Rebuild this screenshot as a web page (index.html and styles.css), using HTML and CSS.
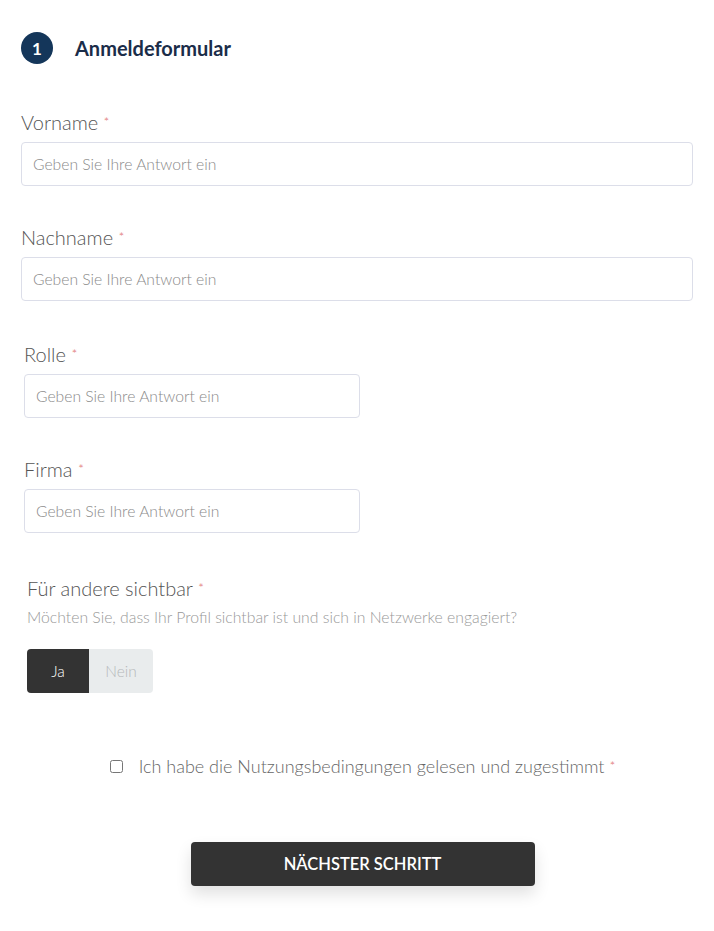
FILE: index.html
```html
<!DOCTYPE html>
<html lang="de">
<head>
    <meta charset="UTF-8">
    <meta name="viewport" content="width=device-width, initial-scale=1.0">
    <title>Anmeldeformular</title>
    <link rel="stylesheet" href="styles.css">
</head>
<body>
    <div class="form-page">
        <!-- Step header -->
        <div class="step-header">
            <span class="step-number">1</span>
            <h1 class="step-title">Anmeldeformular</h1>
        </div>

        <div class="field">
            <label class="field-label" for="vorname">Vorname <span class="req">*</span></label>
            <input type="text" id="vorname" class="text-input" placeholder="Geben Sie Ihre Antwort ein">
        </div>

        <div class="field">
            <label class="field-label" for="nachname">Nachname <span class="req">*</span></label>
            <input type="text" id="nachname" class="text-input" placeholder="Geben Sie Ihre Antwort ein">
        </div>

        <div class="field field-half">
            <label class="field-label" for="rolle">Rolle <span class="req">*</span></label>
            <input type="text" id="rolle" class="text-input" placeholder="Geben Sie Ihre Antwort ein">
        </div>

        <div class="field field-half">
            <label class="field-label" for="firma">Firma <span class="req">*</span></label>
            <input type="text" id="firma" class="text-input" placeholder="Geben Sie Ihre Antwort ein">
        </div>

        <!-- Visibility toggle -->
        <div class="field field-toggle">
            <div class="field-label">Für andere sichtbar <span class="req">*</span></div>
            <p class="field-help">Möchten Sie, dass Ihr Profil sichtbar ist und sich in Netzwerke engagiert?</p>
            <div class="toggle">
                <button type="button" class="toggle-btn active">Ja</button>
                <button type="button" class="toggle-btn">Nein</button>
            </div>
        </div>

        <label class="terms">
            <input type="checkbox" class="terms-box">
            <span>Ich habe die Nutzungsbedingungen gelesen und zugestimmt <span class="req">*</span></span>
        </label>

        <div class="actions">
            <button type="button" class="next-btn">NÄCHSTER SCHRITT</button>
        </div>
    </div>
</body>
</html>
```

FILE: styles.css
```css
body {
    margin: 0;
    background-color: #fff;
    font-family: Lato, "Open Sans", sans-serif;
    color: #555;
}
.form-page {
    padding: 32px 21px 40px 21px;
}
.step-header {
    display: flex;
    align-items: center;
    gap: 22px;
    margin-bottom: 46px;
}
.step-number {
    width: 32px;
    height: 32px;
    border-radius: 50%;
    background-color: #14365a;
    color: #fff;
    font-weight: 700;
    font-size: 17px;
    display: flex;
    align-items: center;
    justify-content: center;
}
.step-title {
    margin: 0;
    font-size: 20px;
    font-weight: 700;
    color: #1b2d49;
}
.field {
    display: flex;
    flex-direction: column;
    margin-bottom: 39px;
}
.field-half {
    margin-left: 3px;
    margin-bottom: 37px;
    padding-top: 2px;
    width: 336px;
}
.field-label {
    font-size: 20px;
    font-weight: 300;
    line-height: 24px;
    color: #555;
    margin-bottom: 8px;
}
.req {
    color: #e07070;
    font-size: 14px;
    vertical-align: top;
}
.text-input {
    box-sizing: border-box;
    height: 44px;
    width: 100%;
    padding: 0 11px;
    border: 1px solid #dcdee9;
    border-radius: 4px;
    font-family: Lato, "Open Sans", sans-serif;
    font-size: 15.7px;
    font-weight: 300;
    color: #444;
}
.text-input::placeholder {
    color: #8a8a8a;
}
.field-toggle {
    margin-left: 6px;
    padding-top: 6px;
}
.field-toggle .field-label {
    margin-bottom: 7px;
}
.field-help {
    margin: 0 0 22px 0;
    font-size: 15.75px;
    font-weight: 300;
    line-height: 20px;
    color: #999;
}
.toggle {
    display: flex;
}
.toggle-btn {
    height: 44px;
    border: none;
    font-family: Lato, "Open Sans", sans-serif;
    font-size: 15.5px;
    font-weight: 300;
    background-color: #e9eced;
    color: #b5b8ba;
    width: 64px;
    border-radius: 0 4px 4px 0;
}
.toggle-btn.active {
    width: 62px;
    background-color: #333;
    color: #fff;
    border-radius: 4px 0 0 4px;
}
.terms {
    display: flex;
    align-items: center;
    justify-content: center;
    gap: 16px;
    margin: 61px 0 0 11px;
    font-size: 18px;
    line-height: 24px;
    font-weight: 300;
    color: #666;
}
.terms-box {
    margin: 0;
    width: 13px;
    height: 13px;
}
.actions {
    display: flex;
    justify-content: center;
    margin: 64px 0 0 11px;
}
.next-btn {
    width: 344px;
    height: 44px;
    border: none;
    border-radius: 4px;
    background-color: #333;
    color: #fff;
    font-family: Lato, "Open Sans", sans-serif;
    font-size: 16.5px;
    font-weight: 600;
    box-shadow: 0 8px 16px rgba(0, 0, 0, 0.12);
}
```
